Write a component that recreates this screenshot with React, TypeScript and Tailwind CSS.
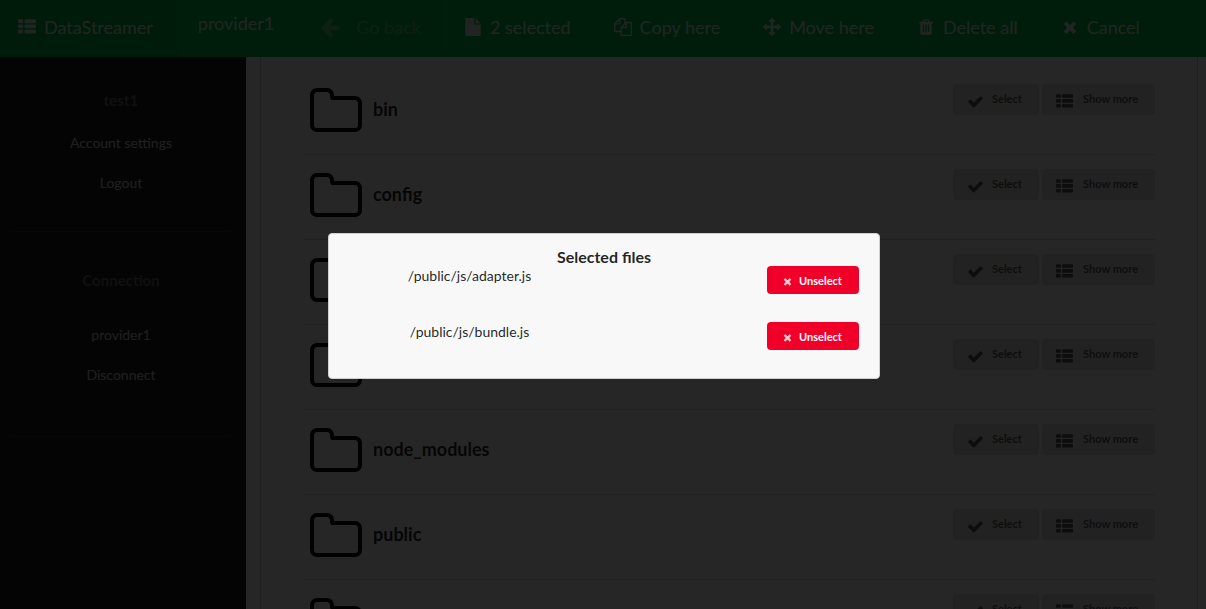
import React from "react";

const TH_CELL_LEFT = "v192q0 40-28 68t-68 28h-320q-40 0-68-28t-28-68v-192q0-40 28-68t68-28h320q40 0 68 28t28 68z";
const TH_CELL_RIGHT = "v192q0 40-28 68t-68 28h-960q-40 0-68-28t-28-68v-192q0-40 28-68t68-28h960q40 0 68 28t28 68z";
const TRASH_BAR = "v-704q0-14-9-23t-23-9h-64q-14 0-23 9t-9 23v704q0 14 9 23t23 9h64q14 0 23-9t9-23z";

const icons = {
  list: [224, 736, 1248].map((y) => `M512 ${y}${TH_CELL_LEFT}M1792 ${y}${TH_CELL_RIGHT}`).join(""),
  folder:
    "M1600 1312v-704q0-40-28-68t-68-28h-704q-40 0-68-28t-28-68v-64q0-40-28-68t-68-28h-320q-40 0-68 28t-28 68v960q0 40 28 68t68 28h1216q40 0 68-28t28-68zm128-704v704q0 92-66 158t-158 66h-1216q-92 0-158-66t-66-158v-960q0-92 66-158t158-66h320q92 0 158 66t66 158v32h672q92 0 158 66t66 158z",
  check:
    "M1671 566q0 40-28 68l-724 724-136 136q-28 28-68 28t-68-28l-136-136-362-362q-28-28-28-68t28-68l136-136q28-28 68-28t68 28l294 295 656-657q28-28 68-28t68 28l136 136q28 28 28 68z",
  times:
    "M1490 1322q0 40-28 68l-136 136q-28 28-68 28t-68-28l-294-294-294 294q-28 28-68 28t-68-28l-136-136q-28-28-28-68t28-68l294-294-294-294q-28-28-28-68t28-68l136-136q28-28 68-28t68 28l294 294 294-294q28-28 68-28t68 28l136 136q28 28 28 68t-28 68l-294 294 294 294q28 28 28 68z",
  move:
    "M1792 896q0 26-19 45l-256 256q-19 19-45 19t-45-19-19-45v-128h-384v384h128q26 0 45 19t19 45-19 45l-256 256q-19 19-45 19t-45-19l-256-256q-19-19-19-45t19-45 45-19h128v-384h-384v128q0 26-19 45t-45 19-45-19l-256-256q-19-19-19-45t19-45l256-256q19-19 45-19t45 19 19 45v128h384v-384h-128q-26 0-45-19t-19-45 19-45l256-256q19-19 45-19t45 19l256 256q19 19 19 45t-19 45-45 19h-128v384h384v-128q0-26 19-45t45-19 45 19l256 256q19 19 19 45z",
  back:
    "M1664 896v128q0 53-32.5 90.5t-84.5 37.5h-704l293 294q38 36 38 90t-38 90l-75 76q-37 37-90 37-52 0-91-37l-651-652q-37-37-37-90 0-52 37-91l651-650q38-38 91-38 52 0 90 38l75 74q38 38 38 91t-38 91l-293 293h704q52 0 84.5 37.5t32.5 90.5z",
  trash:
    `M704 1376${TRASH_BAR}M960 1376${TRASH_BAR}M1216 1376${TRASH_BAR}` +
    "M672 384h448l-48-117q-7-9-17-11h-317q-10 2-17 11zm928 32v64q0 14-9 23t-23 9h-96v948q0 83-47 143.5t-113 60.5h-832q-66 0-113-58.5t-47-141.5v-952h-96q-14 0-23-9t-9-23v-64q0-14 9-23t23-9h309l70-167q15-37 54-63t79-26h320q40 0 79 26t54 63l70 167h309q14 0 23 9t9 23z",
  copy:
    "M1696 384q40 0 68 28t28 68v1216q0 40-28 68t-68 28h-960q-40 0-68-28t-28-68v-288h-544q-40 0-68-28t-28-68v-672q0-40 20-88t48-76l408-408q28-28 76-48t88-20h416q40 0 68 28t28 68v328q68-40 128-40h416zm-544 213l-299 299h299v-299zm-640-384l-299 299h299v-299zm196 647l316-316v-416h-384v416q0 40-28 68t-68 28h-416v640h512v-256q0-40 20-88t48-76zm956 804v-1152h-384v416q0 40-28 68t-68 28h-416v640h896z",
  file:
    "M1152 512v-472q22 14 36 28l408 408q14 14 28 36h-472zm-128 32q0 40 28 68t68 28h544v1056q0 40-28 68t-68 28h-1344q-40 0-68-28t-28-68v-1600q0-40 28-68t68-28h800v544z",
};

type IconName = keyof typeof icons;

function Icon({ name, className }: { name: IconName; className: string }) {
  return (
    <svg viewBox="0 0 1792 1792" fill="currentColor" fillRule="evenodd" aria-hidden="true" className={`shrink-0 overflow-visible ${className}`}>
      <path d={icons[name]} />
    </svg>
  );
}

const actions: { icon: IconName; label: string }[] = [
  { icon: "file", label: "2 selected" },
  { icon: "copy", label: "Copy here" },
  { icon: "move", label: "Move here" },
  { icon: "trash", label: "Delete all" },
  { icon: "times", label: "Cancel" },
];

function TopBar() {
  return (
    <nav className="flex h-[57px] shrink-0 items-stretch bg-[#00c04b] text-lg leading-6 whitespace-nowrap text-white/85">
      <a href="#home" className="flex items-center gap-2 border-r border-black/10 bg-[#00b246] pr-6 pb-[3px] pl-[18px]">
        <Icon name="list" className="size-[18px]" />
        DataStreamer
      </a>
      <div className="border-r border-black/5 px-5 pt-[11px]">provider1</div>
      <button disabled className="flex items-center gap-[15px] border-r border-black/10 px-5 pb-[3px] pl-6 text-[#60d080]">
        <Icon name="back" className="size-[22px]" />
        Go back
      </button>
      {actions.map((a) => (
        <button key={a.label} className="flex items-center gap-2 border-r border-black/5 pr-5 pb-[3px] pl-[22px]">
          <Icon name={a.icon} className="size-[18px]" />
          {a.label}
        </button>
      ))}
    </nav>
  );
}

function SideGroup({ title, links, className }: { title: string; links: string[]; className: string }) {
  return (
    <section className={`flex flex-col items-center border-b border-white/10 ${className}`}>
      <h2 className="text-[15px] leading-5 font-bold text-white/35">{title}</h2>
      <ul className="flex flex-col items-center">
        {links.map((l) => (
          <li key={l} className="py-[10px] text-sm leading-5 text-white/80">
            <a href="#menu">{l}</a>
          </li>
        ))}
      </ul>
    </section>
  );
}

const folders = ["bin", "config", "lib", "models", "node_modules", "public", "routes"];

function FolderRow({ name }: { name: string }) {
  return (
    <li className="flex h-[85px] items-start border-b border-black/15 pt-[14px] pl-[5px]">
      <Icon name="folder" className="size-14" />
      <h3 className="ml-[9px] grow pt-[13px] text-lg leading-6 font-bold text-black/85">{name}</h3>
      <div className="flex gap-[3px] text-[11px] leading-4 font-bold text-black/60">
        <button className="flex h-[31px] w-[86px] items-center rounded bg-[#e0e1e2] pb-0.5 pl-[14px]">
          <Icon name="check" className="mt-[5px] mr-2 size-[17px]" />
          Select
        </button>
        <button className="flex h-[31px] w-[113px] items-center rounded bg-[#e0e1e2] pb-0.5 pl-[14px]">
          <Icon name="list" className="mt-[5px] mr-[10px] size-[17px]" />
          Show more
        </button>
      </div>
    </li>
  );
}

function SelectedFiles() {
  return (
    <div role="dialog" aria-labelledby="dialog-title" className="mt-[3px] w-[552px] rounded border border-[#d0d0d1] bg-[#f8f8f8] px-5 pt-[14px] pb-7 text-black/87">
      <h2 id="dialog-title" className="text-center text-base leading-[18px] font-bold">Selected files</h2>
      <ul className="flex flex-col gap-7">
        {["/public/js/adapter.js", "/public/js/bundle.js"].map((path) => (
          <li key={path} className="grid grid-cols-2 items-start gap-7">
            <span className="text-center text-sm leading-5">{path}</span>
            <button className="flex h-7 w-[92px] items-center justify-self-end rounded bg-[#f00028] pt-0.5 pl-[15px] text-[11px] leading-4 font-bold text-white">
              <Icon name="times" className="mr-[6px] size-[11px] opacity-80" />
              Unselect
            </button>
          </li>
        ))}
      </ul>
    </div>
  );
}

export default function App() {
  return (
    <div className="relative flex h-screen flex-col overflow-hidden bg-white font-['Lato',sans-serif]">
      <TopBar />
      <div className="flex min-h-0 grow">
        <aside className="w-[246px] shrink-0 bg-[#1b1c1d] pr-4 pl-3">
          <SideGroup title="test1" links={["Account settings", "Logout"]} className="gap-[13px] pt-[33px] pb-7" />
          <SideGroup title="Connection" links={["provider1", "Disconnect"]} className="gap-[25px] pt-[38px] pb-[41px]" />
        </aside>
        <main className="mr-2 ml-[14px] grow overflow-hidden border-x border-black/20 px-[42px] pt-[13px]">
          <ul>
            {folders.map((f) => (
              <FolderRow key={f} name={f} />
            ))}
          </ul>
        </main>
      </div>
      <div className="absolute inset-0 flex items-center justify-center bg-black/85 pl-0.5">
        <SelectedFiles />
      </div>
    </div>
  );
}
